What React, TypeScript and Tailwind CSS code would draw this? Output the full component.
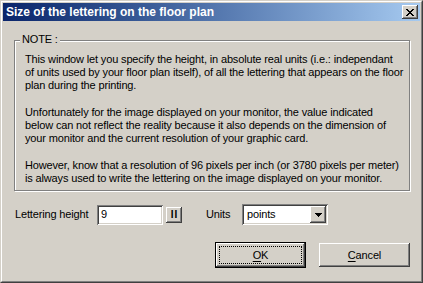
const bevelUp =
  "shadow-[inset_-1px_-1px_0_#404040,inset_1px_1px_0_#ffffff,inset_-2px_-2px_0_#808080,inset_2px_2px_0_#d4d0c8]";
const bevelDown =
  "shadow-[inset_1px_1px_0_#808080,inset_-1px_-1px_0_#ffffff,inset_2px_2px_0_#404040,inset_-2px_-2px_0_#d4d0c8]";

const note: string[][] = [
  [
    "This window let you specify the height, in absolute real units (i.e.: independant",
    "of units used by your floor plan itself), of all the lettering that appears on the floor",
    "plan during the printing.",
  ],
  [
    "Unfortunately for the image displayed on your monitor, the value indicated",
    "below can not reflect the reality because it also depends on the dimension of",
    "your monitor and the current resolution of your graphic card.",
  ],
  [
    "However, know that a resolution of 96 pixels per inch (or 3780 pixels per meter)",
    "is always used to write the lettering on the image displayed on your monitor.",
  ],
];

function CloseGlyph() {
  const rows = ["11000011", "01100110", "00111100", "00011000", "00111100", "01100110", "11000011"];
  return (
    <svg width="8" height="7" viewBox="0 0 8 7" shapeRendering="crispEdges">
      {rows.map((r, y) =>
        r.split("").map((c, x) =>
          c === "1" ? <rect key={`${x}-${y}`} x={x} y={y} width="1" height="1" fill="#000" /> : null
        )
      )}
    </svg>
  );
}

function DownArrow() {
  return (
    <svg width="7" height="4" viewBox="0 0 7 4" shapeRendering="crispEdges">
      <rect x="0" y="0" width="7" height="1" fill="#000" />
      <rect x="1" y="1" width="5" height="1" fill="#000" />
      <rect x="2" y="2" width="3" height="1" fill="#000" />
      <rect x="3" y="3" width="1" height="1" fill="#000" />
    </svg>
  );
}

export default function App() {
  return (
    <div className="w-[423px] h-[283px] bg-[#d4d0c8] font-['Liberation_Sans',Arial,sans-serif] text-[11px] tracking-[-0.15px] text-black">
      <div className="h-full border border-t-[#d4d0c8] border-l-[#d4d0c8] border-r-[#404040] border-b-[#404040]">
        <div className="h-full flex flex-col border border-t-white border-l-white border-r-[#808080] border-b-[#808080] p-[1px]">
          {/* title bar */}
          <div className="h-[18px] flex items-center bg-linear-to-r from-[#0a246a] to-[#a6caf0] pl-[3px] pr-[2px]">
            <span className="flex-1 text-white font-bold text-[12px] tracking-normal leading-[18px] whitespace-nowrap">
              Size of the lettering on the floor plan
            </span>
            <div className={`w-[16px] h-[14px] bg-[#d4d0c8] flex items-center justify-center ${bevelUp}`}>
              <CloseGlyph />
            </div>
          </div>

          {/* body */}
          <div className="flex-1 flex flex-col pl-[11px]">
            <div className="relative mt-[19px] w-[396px] h-[151px] border border-[#808080] shadow-[1px_1px_0_#ffffff,inset_1px_1px_0_#ffffff] pl-[10px] pt-[12px]">
              <span className="absolute -top-[8px] left-[5px] px-[2px] bg-[#d4d0c8] leading-[13px]">NOTE :</span>
              {note.map((para, i) => (
                <div key={i} className={i > 0 ? "mt-[14px]" : ""}>
                  {para.map((line) => (
                    <div key={line} className="h-[13px] leading-[13px] whitespace-nowrap">
                      {line}
                    </div>
                  ))}
                </div>
              ))}
            </div>

            <div className="mt-[13px] h-[21px] flex items-center">
              <span className="w-[83px] pl-[1px] whitespace-nowrap">Lettering height</span>
              <div className={`w-[66px] h-[20px] bg-white flex items-center pl-[4px] ${bevelDown}`}>9</div>
              <div
                className={`ml-[3px] w-[16px] h-[16px] bg-[#d4d0c8] flex items-center justify-center font-bold text-[10px] tracking-[1px] pl-[1px] ${bevelUp}`}
              >
                II
              </div>
              <span className="ml-[24px] w-[36px]">Units</span>
              <div className={`w-[86px] h-[21px] bg-white flex items-center pl-[5px] pr-[2px] ${bevelDown}`}>
                <span className="flex-1">points</span>
                <div className={`w-[16px] h-[17px] bg-[#d4d0c8] flex items-center justify-center ${bevelUp}`}>
                  <DownArrow />
                </div>
              </div>
            </div>

            <div className="mt-[17px] flex items-center pl-[201px]">
              <div className="w-[91px] h-[26px] border border-black">
                <div className={`h-full bg-[#d4d0c8] p-[3px] ${bevelUp}`}>
                  <div className="h-full border border-dotted border-black flex items-center justify-center">
                    <span>
                      <span className="underline underline-offset-2">O</span>K
                    </span>
                  </div>
                </div>
              </div>
              <div className={`ml-[13px] w-[91px] h-[24px] bg-[#d4d0c8] flex items-center justify-center ${bevelUp}`}>
                <span>
                  <span className="underline underline-offset-2">C</span>ancel
                </span>
              </div>
            </div>
          </div>
        </div>
      </div>
    </div>
  );
}
